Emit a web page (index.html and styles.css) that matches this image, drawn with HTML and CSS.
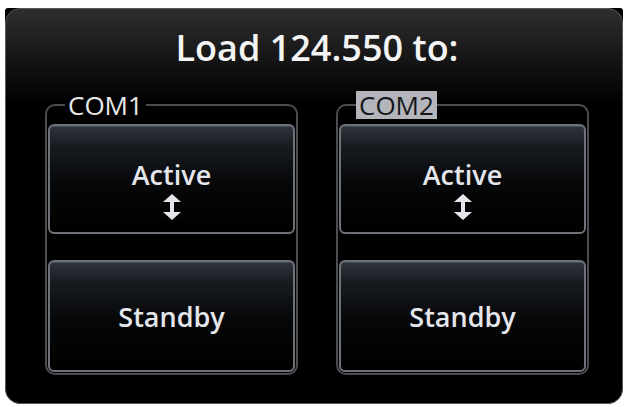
FILE: index.html
```html
<!DOCTYPE html>
<html lang="en">

<head>
    <meta charset="UTF-8" />
    <meta name="viewport" content="width=device-width, initial-scale=1.0" />
    <title>Load Frequency</title>
    <link rel="stylesheet" href="styles.css">
</head>

<body>
    <div class="bezel">
        <div class="panel">
            <h2 class="title">Load 124.550 to:</h2>

            <div class="radios">
                <fieldset class="radio">
                    <legend>COM1</legend>
                    <button class="key key-active">
                        <span>Active</span>
                        <svg class="swap" viewBox="0 0 20 26" width="20" height="26">
                            <path d="M10 0 L19 8 L12 8 L12 18 L19 18 L10 26 L1 18 L8 18 L8 8 L1 8 Z" />
                        </svg>
                    </button>
                    <button class="key">Standby</button>
                </fieldset>

                <fieldset class="radio selected">
                    <legend>COM2</legend>
                    <button class="key key-active">
                        <span>Active</span>
                        <svg class="swap" viewBox="0 0 20 26" width="20" height="26">
                            <path d="M10 0 L19 8 L12 8 L12 18 L19 18 L10 26 L1 18 L8 18 L8 8 L1 8 Z" />
                        </svg>
                    </button>
                    <button class="key">Standby</button>
                </fieldset>
            </div>
        </div>
    </div>
</body>

</html>
```

FILE: styles.css
```css
body {
    background-color: #ffffff;
    font-family: 'Open Sans', 'Noto Sans', sans-serif;
    margin: 0;
    padding: 8px 0 0 5px;
}

.bezel {
    width: 618px;
    height: 396px;
    background: #000;
    border-radius: 3px 3px 16px 16px;
}

.panel {
    box-sizing: border-box;
    height: 100%;
    border: 1px solid #5a5a5a;
    border-radius: 15px;
    background: linear-gradient(#2e2e2e 0, #151515 50px, #000 95px);
    padding: 0 33px 0 39px;
}

.title {
    margin: 0;
    height: 78px;
    line-height: 78px;
    text-align: center;
    color: #f4f4f4;
    font-size: 36px;
    font-weight: 600;
}

.radios {
    display: flex;
    gap: 38px;
    margin-top: 4px;
}

.radio {
    flex: 1;
    margin: 0;
    padding: 5px 1px 1px;
    border: 2px solid #4b4d52;
    border-radius: 10px;
    display: flex;
    flex-direction: column;
    gap: 26px;
}

.radio legend {
    margin-left: 17px;
    padding: 0 3px;
    font-size: 26px;
    line-height: 28px;
    font-weight: 500;
    color: #e8e8ea;
}

.radio.selected legend {
    background: #b3b5ba;
    color: #15171a;
}

.key {
    height: 112px;
    border: 2px solid #6d7279;
    border-radius: 6px;
    background: linear-gradient(#2f353d 0, #161a1f 22px, #060708 60px, #000);
    box-shadow: inset 0 1px 0 rgba(255, 255, 255, 0.12);
    color: #e4e6ec;
    font-family: inherit;
    font-size: 27px;
    font-weight: 600;
    cursor: pointer;
}

.key-active {
    height: 110px;
    display: flex;
    flex-direction: column;
    align-items: center;
    justify-content: center;
    padding-top: 20px;
}

.key-active span {
    line-height: 34px;
}

.swap {
    fill: #e4e6ec;
    margin-top: 2px;
}
```
